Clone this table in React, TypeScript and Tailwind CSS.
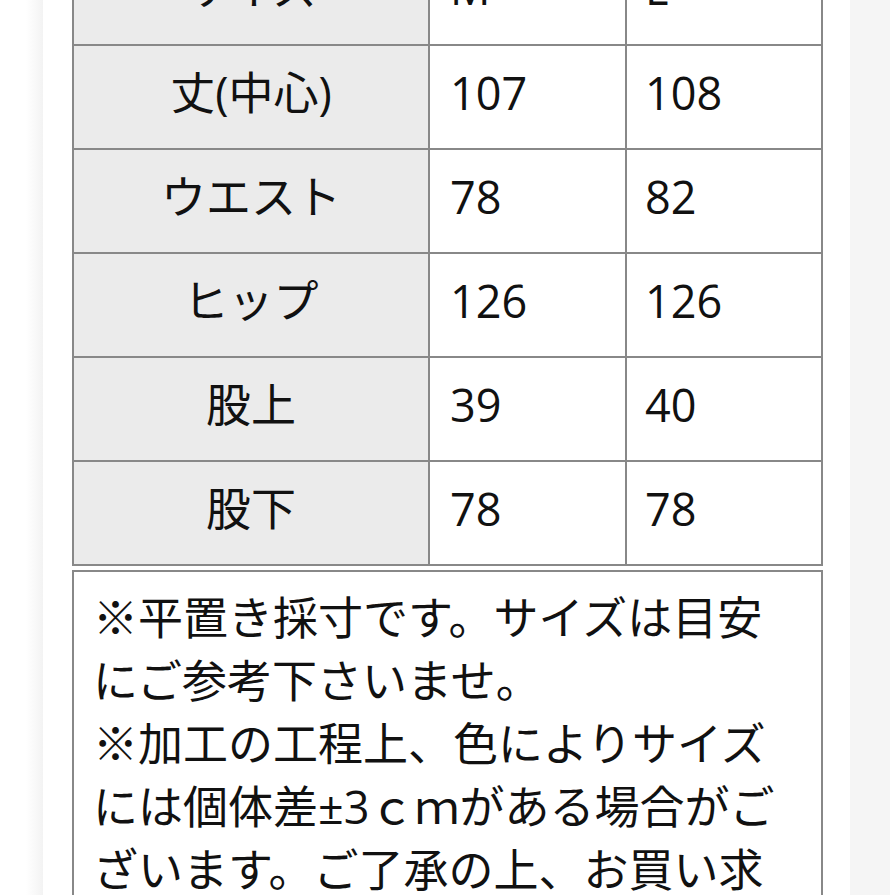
const rows = [
  { label: "サイズ", m: "M", l: "L" },
  { label: "丈(中心)", m: "107", l: "108" },
  { label: "ウエスト", m: "78", l: "82" },
  { label: "ヒップ", m: "126", l: "126" },
  { label: "股上", m: "39", l: "40" },
  { label: "股下", m: "78", l: "78" },
];

export default function App() {
  return (
    <div
      className="flex h-[895px] w-[895px] overflow-hidden bg-white text-[#111]"
      style={{ fontFamily: '"Open Sans", "Noto Sans CJK JP", sans-serif' }}
    >
      <div className="w-[26px] shrink-0 bg-white" />
      <div className="w-[17px] shrink-0 bg-gradient-to-r from-white to-[#f3f3f3]" />

      <div className="w-[807px] shrink-0 bg-white pl-[29px]">
        {/* size table, header row scrolled mostly out of view */}
        <div className="-mt-[62px] w-[751px] border-2 border-[#888]">
          {rows.map((r, i) => (
            <div
              key={r.label}
              className={`flex h-[104px] ${i > 0 ? "border-t-2 border-[#888]" : "h-[102px]"}`}
            >
              <div className="flex w-[356px] shrink-0 items-center justify-center border-r-2 border-[#888] bg-[#ebebeb] pb-[8px] text-[45px]">
                {r.label}
              </div>
              <div className="flex w-[197px] shrink-0 items-center border-r-2 border-[#888] pb-[8px] pl-[20px] text-[45px]">
                {r.m}
              </div>
              <div className="flex flex-1 items-center pb-[8px] pl-[18px] text-[45px]">{r.l}</div>
            </div>
          ))}
        </div>

        {/* notes */}
        <div className="mt-[4px] w-[751px] border-2 border-[#888] pl-[19px] pr-[28px] pt-[14px] text-[45px] leading-[63px]">
          <p>※平置き採寸です。サイズは目安にご参考下さいませ。</p>
          <p>
            ※加工の工程上、色によりサイズには個体差±3ｃｍがある場合がございます。ご了承の上、お買い求め下さいませ。
          </p>
        </div>
      </div>

      <div className="w-[40px] shrink-0 bg-[#f5f5f5]" />
      <div className="flex-1 bg-white" />
    </div>
  );
}
